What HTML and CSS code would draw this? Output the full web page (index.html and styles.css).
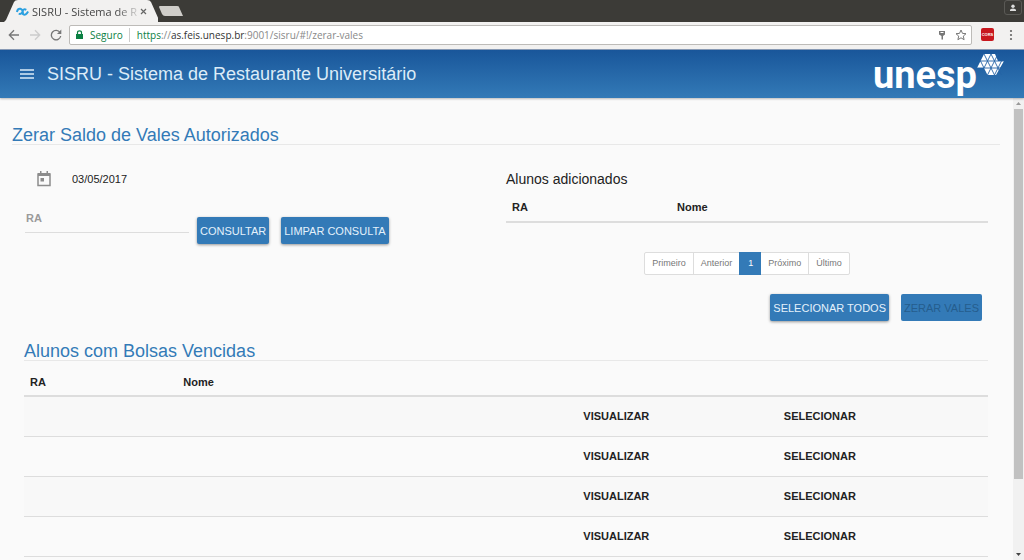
FILE: index.html
```html
<!DOCTYPE html>
<html lang="pt-BR">
<head>
<meta charset="utf-8">
<title>SISRU - Sistema de Restaurante Universitário</title>
<link rel="stylesheet" href="styles.css">
</head>
<body>
<div class="window">
  <div class="tabs">
    <div class="tab">
      <svg class="tab-shape" viewBox="0 0 154 22" preserveAspectRatio="none" aria-hidden="true"><path d="M0 22 2 20 10 2Q11 0 14 0H143Q146 0 147 2L155 20 157 22Z" fill="#f2f1f0"/></svg>
      <svg class="favicon" viewBox="0 0 12 10" aria-hidden="true"><path d="M.8 5.500Q1.500 2 4 2.500T6.500 7.500Q9 9 11.200 5M2.500 7Q5 8 6 5T9.500 3.500" fill="none" stroke="#2ba0e0" stroke-width="1.800"/></svg>
      <span class="tab-title">SISRU - Sistema de R</span>
      <button class="plain tab-close" aria-label="Fechar aba"><svg width="7" height="7" viewBox="0 0 7 7"><path d="M1 1 6 6M6 1 1 6" stroke="#666" stroke-width="1.2"/></svg></button>
    </div>
    <button class="plain new-tab" aria-label="Nova aba"><svg width="26" height="12" viewBox="0 0 26 12"><path d="M2 1H19Q21 1 21 2L25 11H7Q5 11 4 9L1 2Q1 1 2 1Z" fill="#cfcdc9"/></svg></button>
    <button class="plain profile" aria-label="Perfil"><svg width="8" height="8" viewBox="0 0 8 8"><circle cx="4" cy="2.2" r="1.7" fill="#ddd"/><path d="M1 7V6Q1 5 4 4.600Q7 5 7 6V7Z" fill="#ddd"/></svg></button>
  </div>
  <div class="toolbar">
    <button class="plain" aria-label="Voltar"><svg width="12" height="12" viewBox="0 0 12 12"><path d="M11 6H1.500M6 1.300 1.300 6 6 10.700" fill="none" stroke="#777" stroke-width="1.300"/></svg></button>
    <button class="plain" aria-label="Avançar"><svg width="12" height="12" viewBox="0 0 12 12"><path d="M1 6H10.500M6 1.300 10.700 6 6 10.700" fill="none" stroke="#ccc" stroke-width="1.300"/></svg></button>
    <button class="plain" aria-label="Recarregar"><svg width="12" height="12" viewBox="0 0 12 12"><path d="M10 3.500A4.700 4.700 0 1 0 10.700 7" fill="none" stroke="#777" stroke-width="1.300"/><path d="M11.300 .6V5H7Z" fill="#777"/></svg></button>
    <div class="address">
      <svg width="7" height="9" viewBox="0 0 7 9" aria-hidden="true"><path d="M0 4H7V9H0Z" fill="#0b8043"/><path d="M1.500 4V2.500Q1.500 .8 3.500 .8T5.500 2.500V4" fill="none" stroke="#0b8043" stroke-width="1.200"/></svg>
      <span class="secure">Seguro</span>
      <span class="url"><span class="green">https</span><span class="gray">://</span>as.feis.unesp.br<span class="gray">:9001/sisru/#!/zerar-vales</span></span>
      <svg width="8" height="10" viewBox="0 0 8 10" aria-hidden="true"><path d="M1 1H7V4.500L5 6V9.500H3.500V6L1 4.500Z" fill="#777"/><path d="M2.500 2.500H5.500" stroke="#fff"/></svg>
      <svg width="12" height="12" viewBox="0 0 12 12" aria-hidden="true"><path d="M6 1 7.500 4.400 11 4.700 8.300 7.100 9.100 10.700 6 8.800 2.900 10.700 3.700 7.100 1 4.700 4.500 4.400Z" fill="none" stroke="#777"/></svg>
    </div>
    <span class="extension">CORS</span>
    <button class="plain" aria-label="Menu do navegador"><svg width="4" height="12" viewBox="0 0 4 12"><g fill="#666"><circle cx="2" cy="2" r="1.100"/><circle cx="2" cy="6" r="1.100"/><circle cx="2" cy="10" r="1.100"/></g></svg></button>
  </div>
  <header class="header">
    <button class="plain" aria-label="Menu"><svg width="14" height="10" viewBox="0 0 14 10"><path d="M0 1H14M0 5H14M0 9H14" stroke="#dcecf8" stroke-width="1.500"/></svg></button>
    <span class="app-title">SISRU - Sistema de Restaurante Universitário</span>
    <div class="logo">
      <span class="logo-text">unesp</span>
      <svg class="logo-mark" viewBox="0 0 28 24" aria-hidden="true">
        <path d="M7 1H18L21 8H27L19 22H10.500L7 15H0Z" fill="#fff"/>
        <path d="M3 8H27M0 15H24M7 1 17.500 22M14 1 24.500 22M3.500 8 7 15M14 1 7 15M21 1 10.500 22M24.500 8 17.500 22" fill="none" stroke="#2463a6" stroke-width=".9"/>
      </svg>
    </div>
  </header>
  <div class="body">
    <main class="content">
      <h1 class="heading">Zerar Saldo de Vales Autorizados</h1>
      <div class="inner">
        <div class="columns">
          <form class="query">
            <div class="date-row">
              <label for="date" aria-label="Data"><svg width="14" height="16" viewBox="0 0 14 16"><path d="M1 3H13V14.500H1Z" fill="none" stroke="#8c8c8c" stroke-width="1.500"/><path d="M1 2H13V5H1ZM3 0H4.500V3H3ZM9.500 0H11V3H9.500ZM3.500 7H7V10.500H3.500Z" fill="#8c8c8c"/></svg></label>
              <input class="date" id="date" type="text" value="03/05/2017">
            </div>
            <div class="ra-row">
              <input class="ra" type="text" placeholder="RA" aria-label="RA">
              <button class="btn" type="button">CONSULTAR</button>
              <button class="btn" type="button">LIMPAR CONSULTA</button>
            </div>
          </form>
          <section class="added">
            <h2 class="subheading">Alunos adicionados</h2>
            <table class="table">
              <thead><tr><th class="added-ra">RA</th><th>Nome</th></tr></thead>
            </table>
            <nav class="pages" aria-label="Paginação">
              <a href="#">Primeiro</a><a href="#">Anterior</a><a href="#" class="current">1</a><a href="#">Próximo</a><a href="#">Último</a>
            </nav>
            <div class="actions">
              <button class="btn" type="button">SELECIONAR TODOS</button>
              <button class="btn" type="button" disabled>ZERAR VALES</button>
            </div>
          </section>
        </div>
        <h2 class="heading">Alunos com Bolsas Vencidas</h2>
        <table class="table expired">
          <colgroup><col class="col-ra"><col class="col-name"><col class="col-view"><col></colgroup>
          <thead><tr><th>RA</th><th>Nome</th><th></th><th></th></tr></thead>
          <tbody>
            <tr><td></td><td></td><td><button class="plain row-btn">VISUALIZAR</button></td><td><button class="plain row-btn">SELECIONAR</button></td></tr>
            <tr><td></td><td></td><td><button class="plain row-btn">VISUALIZAR</button></td><td><button class="plain row-btn">SELECIONAR</button></td></tr>
            <tr><td></td><td></td><td><button class="plain row-btn">VISUALIZAR</button></td><td><button class="plain row-btn">SELECIONAR</button></td></tr>
            <tr><td></td><td></td><td><button class="plain row-btn">VISUALIZAR</button></td><td><button class="plain row-btn">SELECIONAR</button></td></tr>
          </tbody>
        </table>
      </div>
    </main>
    <div class="scrollbar" aria-hidden="true">
      <svg width="11" height="11" viewBox="0 0 11 11"><path d="M3 7 5.500 4 8 7Z" fill="#999"/></svg>
      <div class="track"><div class="thumb"></div></div>
      <svg width="11" height="11" viewBox="0 0 11 11"><path d="M3 4 5.500 7 8 4Z" fill="#444"/></svg>
    </div>
  </div>
</div>
</body>
</html>
```
FILE: styles.css
```css
* { box-sizing: border-box; }
body { margin: 0; font-family: "Liberation Sans", Arial, sans-serif; font-size: 11px; color: #222; background: #fafafa; }
.window { display: flex; flex-direction: column; height: 100vh; overflow: hidden; }
svg { display: block; flex: none; }
.plain { border: 0; padding: 0; background: none; font: inherit; color: inherit; }

.tabs { display: flex; align-items: center; height: 22px; flex: none; background: #3c3b37; padding: 0 2px 0 4px; font-family: "Open Sans", sans-serif; }
.tab { position: relative; display: flex; align-items: center; width: 154px; height: 22px; padding: 0 11px 0 12px; gap: 3px; }
.tab-shape { position: absolute; inset: 0; width: 100%; height: 100%; }
.favicon { position: relative; width: 13px; height: 11px; }
.tab-title { position: relative; flex: 1; white-space: nowrap; color: #444; font-size: 11px; mask-image: linear-gradient(to right, #000 80%, #0003); }
.tab-close { position: relative; }
.new-tab { margin-right: auto; }
.profile { display: grid; place-items: center; align-self: flex-start; width: 18px; height: 15px; border: 1px solid #5a5955; border-radius: 3px; }

.toolbar { display: flex; align-items: center; gap: 9px; height: 28px; flex: none; padding: 0 11px 2px 8px; background: #f2f1f0; border-bottom: 1px solid #8a9db8; }
.address { display: flex; align-items: center; flex: 1; gap: 7px; height: 20px; margin-left: -2px; padding: 0 4px 0 6px; background: #fff; border: 1px solid #bdbbb8; border-radius: 2px; font: 10px "Open Sans", sans-serif; color: #333; }
.secure { color: #0b8043; padding-right: 6px; border-right: 1px solid #ccc; }
.url { flex: 1; }
.address .url + svg { margin-right: 2px; }
.green { color: #0b8043; }
.gray { color: #888; }
.extension { width: 13px; height: 13px; margin: 0 6px 0 0; border-radius: 2px; background: #c8171e; color: #fff; font: bold 4px/13px "Liberation Sans", sans-serif; text-align: center; }

.header { display: flex; align-items: center; height: 48px; flex: none; gap: 13px; padding: 0 19px 0 20px; background: linear-gradient(#19569a, #337ab7); box-shadow: 0 1px 2px #0004; z-index: 1; }
.app-title { flex: 1; font-size: 18px; color: #dcecf8; }
.logo { display: flex; align-items: flex-start; height: 48px; color: #fff; }
.logo-text { font: bold 38px/50px "Liberation Sans Narrow", Roboto, sans-serif; }
.logo-mark { width: 28px; height: 24px; margin-top: 3px; }

.body { display: flex; flex: 1; min-height: 0; }
.content { flex: 1; overflow: hidden; padding: 26px 13px 0 12px; }
.heading { margin: 0; height: 21px; font-size: 18px; font-weight: 400; line-height: 22px; color: #337ab7; border-bottom: 1px solid #e8e8e8; }
.inner { padding: 0 12px; }
.columns { display: grid; grid-template-columns: 1fr 1fr; }

.query { padding-top: 26px; }
.date-row { display: flex; align-items: center; gap: 21px; padding-left: 13px; height: 16px; }
.date { border: 0; padding: 0; background: none; font: 11px "Liberation Sans", sans-serif; color: #222; }
.ra-row { display: flex; align-items: flex-end; gap: 12px; margin-top: 18px; }
.ra { width: 164px; height: 28px; margin: 0 -4px 11px 1px; border: 0; border-bottom: 1px solid #ddd; padding: 0 1px 1px; background: none; font: bold 11px "Liberation Sans", sans-serif; }
.ra::placeholder { color: #9a9a9a; opacity: 1; }
.btn { height: 27px; padding: 0 3px; border: 0; border-radius: 2px; background: #337ab7; color: #e4f1fb; font: 11px "Liberation Sans", sans-serif; white-space: nowrap; box-shadow: 0 1px 3px #0006; }
.btn:disabled { color: #255d8d; box-shadow: none; }

.added { padding-top: 26px; }
.subheading { margin: 0; font-size: 14px; line-height: 16px; font-weight: 400; }
.table { width: 100%; border-collapse: collapse; table-layout: fixed; }
.table th { text-align: left; font-size: 11px; line-height: 16px; padding: 12px 6px 6px; border-bottom: 2px solid #ddd; }
.added-ra { width: 165px; }
.pages { display: flex; width: max-content; margin: 29px auto 0; border: 1px solid #ddd; border-radius: 2px; background: #fff; font-size: 9px; line-height: 21px; }
.pages a { padding: 0 7px; color: #777; text-decoration: none; border-left: 1px solid #ddd; }
.pages a:first-child { border-left: 0; }
.pages .current { margin: -1px 0; padding: 1px 8px; border-color: #337ab7; background: #337ab7; color: #fff; }
.pages .current + a { border-left: 0; }
.actions { display: flex; justify-content: flex-end; gap: 12px; padding: 19px 6px 19px 0; }

.expired th { padding: 13px 6px 5px; }
.expired td { height: 40px; padding: 0 6px; border-bottom: 1px solid #ddd; }
.expired tbody tr:nth-child(odd) { background: #f8f8f8; }
.col-ra { width: 15.9%; }
.col-name { width: 41.5%; }
.col-view { width: 20.8%; }
.row-btn { font-weight: bold; }

.scrollbar { display: flex; flex-direction: column; width: 11px; background: #f1f1f1; }
.track { flex: 1; padding: 0 1px; }
.thumb { height: 84%; background: #c1c1c1; }
```
